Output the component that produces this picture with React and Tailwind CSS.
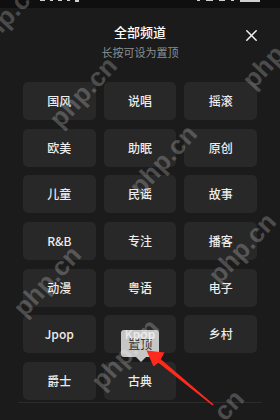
import React from "react";

const items = [
  "国风", "说唱", "摇滚",
  "欧美", "助眠", "原创",
  "儿童", "民谣", "故事",
  "R&B", "专注", "播客",
  "动漫", "粤语", "电子",
  "Jpop", "Kpop", "乡村",
  "爵士", "古典",
];

const font = { fontFamily: '"Noto Sans CJK SC", "Noto Sans", sans-serif' };

function Watermarks() {
  const cls =
    "pointer-events-none absolute -translate-x-1/2 -translate-y-1/2 -rotate-[47deg] whitespace-nowrap text-[26px] font-bold leading-none text-white/[0.22]";
  const wm = { fontFamily: '"Liberation Sans", Arial, sans-serif' };
  return (
    <>
      <span className={`${cls} left-[7px] top-[15px]`} style={wm}>php.cn</span>
      <span className={`${cls} left-[83px] top-[92px]`} style={wm}>php.cn</span>
      <span className={`${cls} left-[276px] top-[53px]`} style={wm}>php.cn</span>
      <span className={`${cls} left-[163px] top-[160px]`} style={wm}>php.cn</span>
      <span className={`${cls} left-[242px] top-[248px]`} style={wm}>php.cn</span>
      <span className={`${cls} left-[47px] top-[281px]`} style={wm}>php.cn</span>
      <span className={`${cls} left-[125px] top-[354px]`} style={wm}>php.cn</span>
      <span className={`${cls} left-[210px] top-[425px]`} style={wm}>php.cn</span>
    </>
  );
}

function RedArrow() {
  return (
    <svg
      className="pointer-events-none absolute left-0 top-0"
      width="280"
      height="420"
      viewBox="0 0 280 420"
    >
      <polygon
        points="146.5,350.5 164.5,352.5 160.8,359.3 213.6,404.6 212.6,405.4 158.4,362.7 153.5,366.5"
        fill="#ff2a1c"
      />
    </svg>
  );
}

export default function App() {
  return (
    <div
      className="relative w-[280px] h-[420px] overflow-hidden bg-[#1b1b1b] text-white"
      style={font}
    >
      {/* status bar remnant */}
      <div className="flex h-[8px] items-start bg-[#0f0f0f]">
        <div className="ml-[40px] flex gap-[5px]">
          <span className="h-[1px] w-[5px] bg-white/80" />
          <span className="h-[1px] w-[3px] bg-white/80" />
          <span className="h-[1px] w-[4px] bg-white/80" />
          <span className="h-[1px] w-[3px] bg-white/80" />
          <span className="h-[2px] w-[4px] bg-white/80" />
        </div>
        <div className="ml-auto mr-[20px] flex gap-[6px]">
          <span className="h-[1px] w-[3px] bg-white/80" />
          <span className="h-[1px] w-[7px] bg-white/80" />
          <span className="h-[1px] w-[6px] bg-white/80" />
          <span className="h-[1px] w-[3px] bg-white/80" />
          <span className="h-[2px] w-[20px] bg-white/80" />
        </div>
      </div>

      {/* header */}
      <div className="relative flex flex-col items-center">
        <div className="mt-[15px] text-[13px] font-medium leading-[18px] text-white">
          全部频道
        </div>
        <div className="mt-[4px] text-[11px] leading-[14px] text-[#8f8f8f]">
          长按可设为置顶
        </div>
        <svg
          className="absolute right-[23px] top-[22px]"
          width="11"
          height="11"
          viewBox="0 0 11 11"
        >
          <path
            d="M0.8 0.8 L10.2 10.2 M10.2 0.8 L0.8 10.2"
            stroke="#f2f2f2"
            strokeWidth="1.5"
            strokeLinecap="round"
          />
        </svg>
      </div>

      {/* grid */}
      <div className="mt-[23px] grid grid-cols-3 gap-x-[8px] gap-y-[8.67px] px-[23px]">
        {items.map((t) => (
          <div
            key={t}
            className="relative flex h-[38px] items-center justify-center rounded-[5px] bg-[#282828]"
          >
            {t === "Kpop" && (
              <div className="absolute left-[17.7px] top-[15px] flex h-[27px] w-[37.6px] items-end justify-center rounded-[3px] bg-[#c6c6c6] pb-[6px]">
                <span className="text-[12px] leading-[14px] text-[#2a2a2a]">置顶</span>
                <span className="absolute bottom-[-5px] left-[15px] h-0 w-0 border-x-[5px] border-t-[5px] border-x-transparent border-t-[#c6c6c6]" />
              </div>
            )}
            <span className="relative text-[12px] font-medium leading-[16px] text-[#ececec]">
              {t}
            </span>
          </div>
        ))}
      </div>

      {/* bottom line */}
      <div className="mx-[18px] mt-[2px] h-[1.5px] rounded-full bg-[#2c2c2c]" />

      <Watermarks />
      <RedArrow />
    </div>
  );
}
